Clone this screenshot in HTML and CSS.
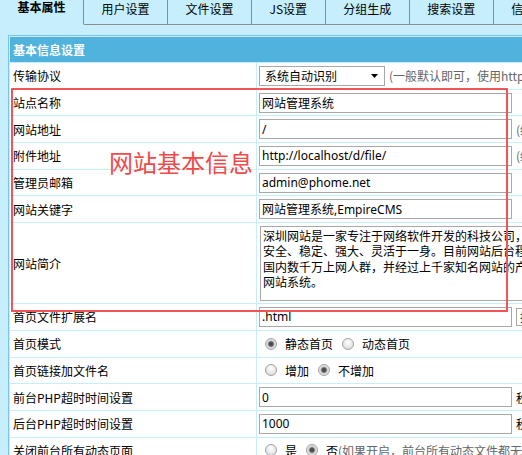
FILE: index.html
```html
<!DOCTYPE html>
<html lang="zh-CN">
<head>
<meta charset="utf-8">
<title>系统参数设置</title>
<link rel="stylesheet" href="styles.css">
</head>
<body>
<div class="tabs">
  <div class="tab active">基本属性</div>
  <div class="tab">用户设置</div>
  <div class="tab">文件设置</div>
  <div class="tab">JS设置</div>
  <div class="tab">分组生成</div>
  <div class="tab">搜索设置</div>
  <div class="tab">信息设置</div>
  <div class="tab-fill"></div>
</div>

<div class="form">
  <div class="head">基本信息设置</div>

  <div class="label">传输协议</div>
  <div class="field">
    <div class="select"><span>系统自动识别</span><svg class="arrow" width="7" height="4" viewBox="0 0 7 4"><polygon points="0,0 7,0 3.5,4" fill="#000"/></svg></div>
    <span class="hint">(一般默认即可，使用http://或https://)</span>
  </div>

  <div class="label">站点名称</div>
  <div class="field"><input class="text" type="text" value="网站管理系统"></div>

  <div class="label">网站地址</div>
  <div class="field"><input class="text" type="text" value="/"><span class="hint">(结尾需加"/"，如：/)</span></div>

  <div class="label">附件地址</div>
  <div class="field"><input class="text" type="text" value="http://localhost/d/file/"><span class="hint">(结尾需加"/")</span></div>

  <div class="label">管理员邮箱</div>
  <div class="field"><input class="text" type="text" value="admin@phome.net"></div>

  <div class="label">网站关键字</div>
  <div class="field"><input class="text" type="text" value="网站管理系统,EmpireCMS"></div>

  <div class="label">网站简介</div>
  <div class="field"><textarea class="area" wrap="off">深圳网站是一家专注于网络软件开发的科技公司，其主营产品“网站管理系统”是目前国内应用最广泛的
安全、稳定、强大、灵活于一身。目前网站后台程序已经广泛应用在国内上百万家网站，覆盖
国内数千万上网人群，并经过上千家知名网站的产品检测，被称为国内最安全、最稳定的开源
网站系统。</textarea></div>

  <div class="label">首页文件扩展名</div>
  <div class="field"><input class="text" type="text" value=".html"><div class="mini-select">扩展名</div></div>

  <div class="label">首页模式</div>
  <div class="field radios">
    <label class="opt"><input class="radio" type="radio" name="indexmode" checked>静态首页</label>
    <label class="opt"><input class="radio" type="radio" name="indexmode">动态首页</label>
  </div>

  <div class="label">首页链接加文件名</div>
  <div class="field radios">
    <label class="opt"><input class="radio" type="radio" name="indexaddfile">增加</label>
    <label class="opt"><input class="radio" type="radio" name="indexaddfile" checked>不增加</label>
  </div>

  <div class="label">前台PHP超时时间设置</div>
  <div class="field"><input class="text" type="text" value="0"><span class="unit">秒</span></div>

  <div class="label">后台PHP超时时间设置</div>
  <div class="field"><input class="text" type="text" value="1000"><span class="unit">秒</span></div>

  <div class="label">关闭前台所有动态页面</div>
  <div class="field radios">
    <label class="opt"><input class="radio" type="radio" name="closeqdt">是</label>
    <label class="opt"><input class="radio" type="radio" name="closeqdt" checked>否<span class="hint">(如果开启，前台所有动态文件都无法访问)</span></label>
  </div>
</div>

<div class="mark-box"></div>
<div class="mark-text">网站基本信息</div>
</body>
</html>
```

FILE: styles.css
```css
html {
  overflow: hidden;
}

body {
  margin: 0;
  position: relative;
  background: #c6eefc;
  color: #000;
  font-family: "Noto Sans CJK SC", sans-serif;
  font-size: 12px;
}

/* ---------- tabs ---------- */
.tabs {
  display: flex;
  height: 25px;
}

.tab {
  box-sizing: border-box;
  height: 25px;
  padding: 2px 17.5px 0;
  line-height: 14px;
  white-space: nowrap;
  border-right: 1px solid #8c8c8c;
  border-bottom: 1px solid #8c8c8c;
}

.tab.active {
  padding-top: 0;
  font-weight: bold;
  border-bottom-color: transparent;
}

.tab-fill {
  flex: 1;
  border-bottom: 1px solid #8c8c8c;
}

/* ---------- form grid ---------- */
.form {
  width: 760px;
  margin: 10px 0 0 8px;
  padding: 1px;
  border: 1px solid #7cc4e6;
  background: #c6eefc;
  display: grid;
  grid-template-columns: 246px 1fr;
  grid-template-rows: 25px repeat(6, 25.7px) 80px repeat(6, 25.7px);
  gap: 1px;
}

.head {
  grid-column: 1 / -1;
  background: #4fb3de;
  color: #fff;
  font-weight: bold;
  padding-left: 3px;
  display: flex;
  align-items: center;
}

.label {
  background: #fff;
  padding-left: 3px;
  display: flex;
  align-items: center;
  white-space: nowrap;
}

.field {
  background: #fff;
  padding-left: 2px;
  display: flex;
  align-items: center;
  gap: 4px;
  white-space: nowrap;
  overflow: hidden;
}

.text {
  box-sizing: border-box;
  width: 253px;
  height: 20px;
  margin: 0;
  padding: 0 2px;
  border: 1px solid #a8a8a8;
  background: #fff;
  color: #000;
  font-family: "Noto Sans", "Noto Sans CJK SC", sans-serif;
  font-size: 12px;
  outline: none;
  flex: none;
}

.select {
  box-sizing: border-box;
  width: 126px;
  height: 20px;
  border: 1px solid #a8a8a8;
  background: #fff;
  padding: 0 6px 0 5px;
  display: flex;
  align-items: center;
  justify-content: space-between;
  flex: none;
}

.arrow {
  display: block;
}

.hint {
  color: #666;
}

.unit {
  color: #000;
}

.mini-select {
  box-sizing: border-box;
  height: 18px;
  padding: 0 14px 0 3px;
  border: 1px solid #a8a8a8;
  background: #fff;
  line-height: 16px;
  flex: none;
}

.area {
  box-sizing: border-box;
  width: 520px;
  height: 75px;
  margin: 0 0 0 1px;
  padding: 1px 2px;
  border: 1px solid #a8a8a8;
  font-family: "Noto Sans CJK SC", sans-serif;
  font-size: 12px;
  line-height: 15.5px;
  color: #000;
  white-space: pre;
  overflow: hidden;
  resize: none;
  outline: none;
  flex: none;
}

/* ---------- radios ---------- */
.radios {
  padding-left: 8px;
  gap: 0;
}

.opt {
  display: flex;
  align-items: center;
  margin-right: 9px;
}

.radio {
  appearance: none;
  -webkit-appearance: none;
  box-sizing: border-box;
  width: 12px;
  height: 12px;
  margin: 0 8px 0 0;
  border: 1px solid #a2a2a2;
  border-radius: 50%;
  background: radial-gradient(circle at 50% 35%, #fdfdfd 0, #e4e4e4 65%, #d2d2d2 100%);
  flex: none;
}

.radio:checked {
  background: radial-gradient(circle, #444 0, #555 2px, #9a9a9a 2.8px, #dcdcdc 3.8px, #efefef 100%);
}

/* ---------- annotation overlay ---------- */
.mark-box {
  position: absolute;
  left: 11px;
  top: 88px;
  width: 497px;
  height: 224px;
  box-sizing: border-box;
  border: 2px solid #f25555;
  pointer-events: none;
}

.mark-text {
  position: absolute;
  left: 109px;
  top: 150px;
  font-family: "Noto Sans CJK SC", sans-serif;
  font-size: 24px;
  line-height: 24px;
  color: #f04a4a;
  white-space: nowrap;
  pointer-events: none;
}
```
